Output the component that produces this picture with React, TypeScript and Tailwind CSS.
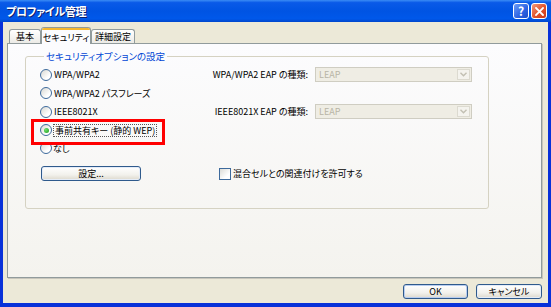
import React from "react";

function Radio({ checked = false }: { checked?: boolean }) {
  return (
    <span className="flex h-[12px] w-[12px] shrink-0 items-center justify-center rounded-full border border-[#3d6a9c] bg-[linear-gradient(135deg,#d8d8d2,#ffffff_70%)]">
      {checked && <span className="h-[5px] w-[5px] rounded-full bg-[radial-gradient(circle_at_35%_35%,#6fe06f,#1a9a1a)]" />}
    </span>
  );
}

function XPButton({ children, w, def = false }: { children: React.ReactNode; w: string; def?: boolean }) {
  return (
    <div
      className={`flex h-[15px] items-center justify-center whitespace-nowrap rounded-[3px] border border-[#2f5a8c] bg-[linear-gradient(to_bottom,#ffffff,#f2f1ec_60%,#dcd8cc)] text-[9px] leading-none text-black ${w} ${
        def ? "shadow-[inset_0_0_0_1px_#b8cdf0]" : "shadow-[inset_0_0_0_1px_#e4ecf8]"
      }`}
    >
      {children}
    </div>
  );
}

function DisabledSelect() {
  return (
    <div className="flex h-[15px] w-[157px] items-center border border-[#cfcdc2] bg-[#efede4] pl-[3px]">
      <span className="flex-1 text-[9px] leading-none text-[#b8b5a6]">LEAP</span>
      <span className="mr-[1px] flex h-[11px] w-[13px] items-center justify-center border border-[#dcdad0] bg-[#f4f3ee]">
        <svg width="7" height="5" viewBox="0 0 7 5">
          <path d="M0.5 0.8 L3.5 3.8 L6.5 0.8" fill="none" stroke="#c2bfb2" strokeWidth="1.4" />
        </svg>
      </span>
    </div>
  );
}

export default function App() {
  return (
    <div className="flex h-[307px] w-[551px] flex-col overflow-hidden bg-[#0831d9] font-['Noto_Sans_CJK_JP',sans-serif] font-normal [font-feature-settings:'palt'] text-black">
      {/* Title bar */}
      <div className="flex h-[22px] shrink-0 items-center bg-[linear-gradient(to_bottom,#3b8cf5_0%,#0a5ae8_12%,#0054e3_50%,#0058ea_85%,#0046cc_100%)] pl-[6px] pr-[4px]">
        <span className="flex-1 text-[11px] font-bold leading-none tracking-[-0.3px] text-white [text-shadow:1px_1px_0_#0a1e6e]">
          プロファイル管理
        </span>
        <div className="flex items-center gap-[2px]">
          <div className="flex h-[16px] w-[16px] items-center justify-center rounded-[3px] border border-white bg-[linear-gradient(135deg,#6b9cf7,#2c62e2_60%,#1f4fc9)] text-[12px] font-bold leading-none text-white">
            ?
          </div>
          <div className="flex h-[16px] w-[16px] items-center justify-center rounded-[3px] border border-white bg-[linear-gradient(135deg,#f29a7c,#e2522a_55%,#c7391a)]">
            <svg width="9" height="9" viewBox="0 0 9 9">
              <path d="M1 1 L8 8 M8 1 L1 8" stroke="white" strokeWidth="1.8" strokeLinecap="square" />
            </svg>
          </div>
        </div>
      </div>

      {/* Body */}
      <div className="mx-[3px] mb-[4px] flex flex-1 flex-col bg-[#ece9d8] pl-[4px] pr-[6px] pt-[4px]">
        {/* Tabs */}
        <div className="relative z-10 flex h-[17px] items-end whitespace-nowrap pl-[2px] text-[9px] leading-none">
          <div className="flex h-[14px] w-[32px] items-center justify-center rounded-t-[3px] border border-b-0 border-[#919b9c] bg-[linear-gradient(to_bottom,#ffffff,#ecebe6)]">
            基本
          </div>
          <div className="-mb-[1px] flex h-[17px] w-[50px] flex-col rounded-t-[3px] border border-b-0 border-[#919b9c] bg-[#fcfcfe]">
            <div className="h-[2px] rounded-t-[2px] bg-[#f5b730]" />
            <div className="flex flex-1 items-center justify-center">セキュリティ</div>
          </div>
          <div className="flex h-[14px] w-[44px] items-center justify-center rounded-t-[3px] border border-b-0 border-[#919b9c] bg-[linear-gradient(to_bottom,#ffffff,#ecebe6)]">
            詳細設定
          </div>
        </div>

        {/* Panel */}
        <div className="h-[235px] border border-[#919b9c] bg-[linear-gradient(to_bottom,#fcfcfe,#f4f3ee)] pl-[17px] pt-[5px] shadow-[1px_1px_0_#c8c6bc]">
          <fieldset className="relative w-[464px] whitespace-nowrap rounded-[3px] border border-[#d5d2c2] pb-[27px] pl-[14px] pt-[2px] text-[9px] leading-none">
            <legend className="ml-[4px] px-[2px] text-[9.5px] leading-[14px] text-[#0046d5]">セキュリティオプションの設定</legend>

            <div className="flex h-[19px] items-center">
              <div className="flex w-[160px] items-center gap-[2px]">
                <Radio />
                <span>WPA/WPA2</span>
              </div>
              <span className="w-[108px] text-right">WPA/WPA2 EAP の種類:</span>
              <span className="ml-[7px]">
                <DisabledSelect />
              </span>
            </div>
            <div className="flex h-[18px] items-center">
              <div className="flex w-[160px] items-center gap-[2px]">
                <Radio />
                <span>WPA/WPA2 パスフレーズ</span>
              </div>
            </div>
            <div className="flex h-[19px] items-center">
              <div className="flex w-[160px] items-center gap-[2px]">
                <Radio />
                <span>IEEE8021X</span>
              </div>
              <span className="w-[108px] text-right">IEEE8021X EAP の種類:</span>
              <span className="ml-[7px]">
                <DisabledSelect />
              </span>
            </div>
            <div className="relative flex h-[18px] items-center">
              <div className="flex w-[160px] items-center gap-[1px]">
                <Radio checked />
                <span className="border border-dotted border-[#555] px-[1px] py-[1px]">事前共有キー (静的 WEP)</span>
              </div>
              <div className="pointer-events-none absolute left-[-9px] top-[-2px] h-[26px] w-[134px] border-[3px] border-[#ff0000]" />
            </div>
            <div className="flex h-[18px] items-center">
              <div className="flex w-[160px] items-center gap-[1px]">
                <Radio />
                <span>なし</span>
              </div>
            </div>

            <div className="mt-[9px] flex items-center">
              <div className="ml-[1px]">
                <XPButton w="w-[100px]">設定...</XPButton>
              </div>
              <div className="ml-[78px] flex items-center gap-[2px]">
                <span className="h-[12px] w-[12px] border border-[#3d6a9c] bg-[linear-gradient(135deg,#dcdcd7,#ffffff_70%)]" />
                <span>混合セルとの関連付けを許可する</span>
              </div>
            </div>
          </fieldset>
        </div>

        {/* Bottom buttons */}
        <div className="mt-[6px] flex justify-end gap-[8px]">
          <XPButton w="w-[65px]" def>
            OK
          </XPButton>
          <XPButton w="w-[66px]">キャンセル</XPButton>
        </div>
      </div>
    </div>
  );
}
